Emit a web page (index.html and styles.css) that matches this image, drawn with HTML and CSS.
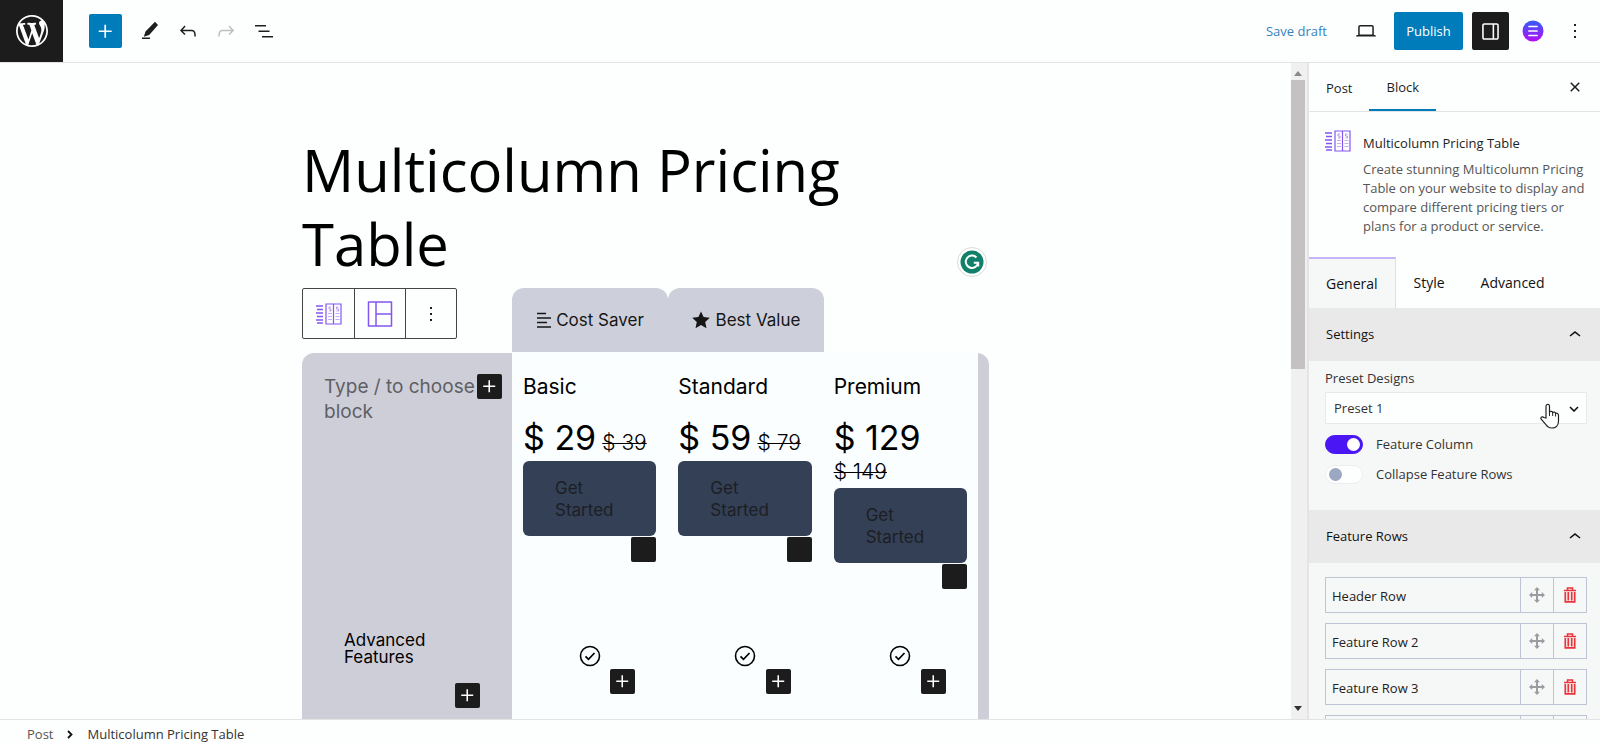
FILE: index.html
```html
<!DOCTYPE html>
<html lang="en">
<head>
<meta charset="utf-8">
<title>Multicolumn Pricing Table</title>
<link rel="stylesheet" href="styles.css">
</head>
<body>
<svg class="sprite" aria-hidden="true">
  <symbol id="plus" viewBox="0 0 24 24"><path d="M11 12.5V17.5H12.5V12.5H17.5V11H12.5V6H11V11H6V12.5H11Z"/></symbol>
  <symbol id="dots" viewBox="0 0 24 24"><path d="M13 19h-2v-2h2v2zm0-6h-2v-2h2v2zm0-6h-2V5h2v2z"/></symbol>
  <symbol id="up" viewBox="0 0 24 24"><path d="M6.5 12.4L12 8l5.5 4.4-.9 1.2L12 10l-4.5 3.6-1-1.2z"/></symbol>
  <symbol id="check" viewBox="0 0 22 22"><circle cx="11" cy="11" r="9.5" fill="none" stroke="currentColor" stroke-width="1.6"/><path d="M6.5 11.4l3 3 6-6.4" fill="none" stroke="currentColor" stroke-width="1.7"/></symbol>
  <symbol id="pricing" viewBox="0 0 26 22"><g fill="none" stroke="currentColor"><path d="M0 3h7M1 6.500h6M0 10h7M1 13.500h6M0 17h7M1 20h6" stroke-width="1.300"/><path d="M10 1h15v20H10zM17.500 1v20" stroke-width="1.200"/><path d="M12 10.500h4M12 13.500h4M12 16.500h4M19.500 10.500h4M19.500 13.500h4M19.500 16.500h4" stroke-width=".8" opacity=".6"/><path d="M15 4h-2v2h2v2h-2M22.500 4h-2v2h2v2h-2" stroke-width=".8" opacity=".7"/></g></symbol>
  <symbol id="move" viewBox="0 0 16 16"><path d="M8 0l3 3.200H9v3.800h3.800V5L16 8l-3.200 3V9H9v3.800h2L8 16l-3-3.200h2V9H3.200v2L0 8l3.200-3v2H7V3.200H5z"/></symbol>
  <symbol id="trash" viewBox="0 0 14 16"><path d="M1 3.500h12M4.500 3V1h5v2" fill="none" stroke="currentColor" stroke-width="1.500"/><path d="M2.300 5v9.800h9.400V5M5.300 5v8.500M8.700 5v8.500" fill="none" stroke="currentColor" stroke-width="1.700"/></symbol>
</svg>

<header class="topbar">
  <a class="logo" href="#" aria-label="View posts"><svg viewBox="0 0 20 20"><path d="M20 10c0-5.51-4.490-10-10-10C4.480 0 0 4.490 0 10c0 5.520 4.480 10 10 10 5.510 0 10-4.480 10-10zM7.780 15.370L4.370 6.220c.55-.02 1.170-.08 1.170-.08.5-.06.44-1.130-.06-1.110 0 0-1.450.11-2.370.11-.18 0-.37 0-.58-.01C4.120 2.690 6.870 1.110 10 1.110c2.330 0 4.450.87 6.050 2.340-.68-.11-1.650.39-1.650 1.580 0 .74.45 1.360.9 2.100.35.61.55 1.360.55 2.460 0 1.490-1.400 5-1.400 5l-3.030-8.370c.54-.02.82-.17.82-.17.5-.05.44-1.250-.06-1.220 0 0-1.440.12-2.380.12-.87 0-2.330-.12-2.330-.12-.5-.03-.56 1.200-.06 1.220l.92.08 1.260 3.410zM17.410 10c.24-.64.74-1.870.43-4.250.7 1.290 1.050 2.710 1.050 4.250 0 3.290-1.730 6.240-4.400 7.780.97-2.590 1.940-5.200 2.920-7.780zM6.100 18.090C3.120 16.650 1.110 13.530 1.110 10c0-1.300.23-2.480.72-3.590C3.250 10.300 4.670 14.200 6.100 18.090zm4.030-6.630l2.580 6.980c-.86.29-1.760.45-2.710.45-.79 0-1.570-.11-2.290-.33.81-2.380 1.620-4.740 2.420-7.100z"/></svg></a>
  <div class="tools">
    <button class="inserter" aria-label="Add block"><svg><use href="#plus"/></svg></button>
    <button class="tool" aria-label="Tools"><svg viewBox="0 0 24 24"><path d="m20 6-3-3.200-9.500 9.700-1.700 5.200 5.400-1.700L20 6ZM12 18.500H4V20h8v-1.500Z"/></svg></button>
    <button class="tool" aria-label="Undo"><svg viewBox="0 0 24 24"><path d="M18.300 11.700c-.6-.6-1.400-.9-2.300-.9H6.700l2.900-3.300-1.100-1-4.500 5L8.500 16l1-1-2.700-2.700H16c.5 0 .9.2 1.300.5 1 1 1 3.400 1 4.500v.3h1.500v-.2c0-1.500 0-4.300-1.500-5.700z"/></svg></button>
    <button class="tool faded" aria-label="Redo"><svg viewBox="0 0 24 24"><path d="M15.600 6.500l-1.100 1 2.900 3.300H8c-.9 0-1.700.3-2.300.9-1.400 1.500-1.400 4.200-1.400 5.600v.2h1.500v-.3c0-1.100 0-3.500 1-4.500.3-.3.7-.5 1.300-.5h9.200L14.500 15l1.100 1.100 4.600-4.600-4.600-5z"/></svg></button>
    <button class="tool" aria-label="Document overview"><svg viewBox="0 0 24 24"><path d="M3 6h11v1.500H3V6Zm3.500 5.500h11V13h-11v-1.500ZM21 17H10v1.500h11V17Z"/></svg></button>
  </div>
  <div class="actions">
    <button class="save">Save draft</button>
    <button class="tool" aria-label="Preview"><svg viewBox="0 0 24 24"><path d="M20.500 16h-.7V8c0-1.100-.9-2-2-2H6.200c-1.100 0-2 .9-2 2v8h-.7c-.8 0-1.500.7-1.500 1.500h20c0-.8-.7-1.500-1.500-1.500zM5.700 8c0-.3.2-.5.5-.5h11.600c.3 0 .5.2.5.5v7.600H5.700V8z"/></svg></button>
    <button class="publish">Publish</button>
    <button class="panel-toggle" aria-label="Settings"><svg viewBox="0 0 24 24"><path d="M18 4H6c-1.100 0-2 .9-2 2v12c0 1.100.9 2 2 2h12c1.100 0 2-.9 2-2V6c0-1.100-.9-2-2-2zm-4 14.500H6c-.3 0-.5-.2-.5-.5V6c0-.3.2-.5.5-.5h8v13zm4.500-.5c0 .3-.2.500-.5.500h-2.500v-13H18c.3 0 .5.2.5.5v12z"/></svg></button>
    <button class="blocks" aria-label="Essential Blocks"><svg viewBox="0 0 22 22"><defs><linearGradient id="eb" x1="0" y1="0" x2="0" y2="1"><stop offset="0.1" stop-color="#3d58f5"/><stop offset="1" stop-color="#b80af5"/></linearGradient></defs><circle cx="11" cy="11" r="10.500" fill="url(#eb)"/><path d="M7 6.500h8M7 11h2M10 11h5M7 15.500h8" stroke="#fff" stroke-width="1.700" stroke-linecap="round"/></svg></button>
    <button class="tool" aria-label="Options"><svg><use href="#dots"/></svg></button>
  </div>
</header>

<div class="workspace">
  <main class="canvas">
    <div class="content">
      <h1 class="title">Multicolumn Pricing Table</h1>
      <svg class="grammar" viewBox="0 0 30 30" role="img" aria-label="Grammar check"><circle cx="15" cy="15" r="14.500" fill="#fff" stroke="#d5dcda"/><circle cx="15" cy="15" r="11.500" fill="#11806a"/><path d="M19.500 10.500a6.200 6.200 0 1 0 1.600 5.200h-4.300M21.200 15.700v3.800" fill="none" stroke="#fff" stroke-width="2"/></svg>
      <div class="block-head">
        <div class="block-tools">
          <button aria-label="Pricing table block"><svg class="pricing-icon"><use href="#pricing"/></svg></button>
          <button aria-label="Layout"><svg class="layout-icon" viewBox="0 0 26 26"><path d="M1.500 1h23v24h-23zM9 1v24M9 13h15.500" fill="none" stroke="currentColor" stroke-width="1.500" stroke-linejoin="round"/></svg></button>
          <button class="dark" aria-label="Block options"><svg class="dots-icon"><use href="#dots"/></svg></button>
        </div>
        <div class="ribbons">
          <div class="ribbon"><svg viewBox="0 0 16 16"><path d="M1 1.500h9M1 6h14M1 10.500h10M1 15h14" stroke="currentColor" stroke-width="1.700"/></svg>Cost Saver</div>
          <div class="ribbon wide"><svg viewBox="0 0 18 17"><path d="M9 0l2.600 5.600 6.200.7-4.600 4.200 1.300 6.200L9 13.600l-5.500 3.100 1.300-6.200L.2 6.300l6.200-.7z"/></svg>Best Value</div>
        </div>
      </div>
      <div class="pricing">
        <section class="features">
          <div class="feature-header"><p>Type / to choose block</p><button class="add" aria-label="Add block"><svg><use href="#plus"/></svg></button></div>
          <div class="feature-row"><p>Advanced Features</p><button class="add" aria-label="Add block"><svg><use href="#plus"/></svg></button></div>
        </section>
        <section class="plan">
          <div class="plan-header"><h2>Basic</h2><p class="price"><span>$ 29</span> <s>$ 39</s></p><button class="start">Get Started</button><button class="add" aria-label="Add block"></button></div>
          <div class="plan-row"><svg class="check"><use href="#check"/></svg><button class="add" aria-label="Add block"><svg><use href="#plus"/></svg></button></div>
        </section>
        <section class="plan">
          <div class="plan-header"><h2>Standard</h2><p class="price"><span>$ 59</span> <s>$ 79</s></p><button class="start">Get Started</button><button class="add" aria-label="Add block"></button></div>
          <div class="plan-row"><svg class="check"><use href="#check"/></svg><button class="add" aria-label="Add block"><svg><use href="#plus"/></svg></button></div>
        </section>
        <section class="plan">
          <div class="plan-header"><h2>Premium</h2><p class="price"><span>$ 129</span> <s>$ 149</s></p><button class="start">Get Started</button><button class="add" aria-label="Add block"></button></div>
          <div class="plan-row"><svg class="check"><use href="#check"/></svg><button class="add" aria-label="Add block"><svg><use href="#plus"/></svg></button></div>
        </section>
      </div>
    </div>
  </main>
  <div class="scrollbar" aria-hidden="true"><svg viewBox="0 0 8 5"><path d="M0 5l4-5 4 5z" fill="#8a8a8a"/></svg><div class="thumb"></div><svg class="down" viewBox="0 0 8 5"><path d="M0 0l4 5 4-5z" fill="#333"/></svg></div>
  <aside class="sidebar">
    <nav class="side-tabs"><button>Post</button><button class="active">Block</button><button class="close" aria-label="Close settings"><svg viewBox="0 0 24 24"><path d="M12 13.060l3.712 3.713 1.061-1.060L13.061 12l3.712-3.712-1.060-1.060L12 10.938 8.288 7.227l-1.061 1.060L10.939 12l-3.712 3.712 1.060 1.061L12 13.061z"/></svg></button></nav>
    <section class="card"><svg class="pricing-icon"><use href="#pricing"/></svg><div><h2>Multicolumn Pricing Table</h2><p>Create stunning Multicolumn Pricing Table on your website to display and compare different pricing tiers or plans for a product or service.</p></div></section>
    <nav class="panel-tabs"><button class="active">General</button><button>Style</button><button>Advanced</button></nav>
    <section class="panel settings">
      <h2><button>Settings<svg><use href="#up"/></svg></button></h2>
      <div class="panel-body">
        <label for="preset">Preset Designs</label>
        <div class="select"><select id="preset"><option>Preset 1</option></select><svg class="caret" viewBox="0 0 10 6"><path d="M1 1l4 4 4-4" fill="none" stroke="#111" stroke-width="1.600"/></svg>
        <svg class="hand" viewBox="0 0 20 26"><path d="M6 15V3.500C6 .5 9.500.5 9.500 3.500V9c.8-1 3-.8 3.200.6 1-.9 2.700-.5 2.900.9 1.200-.7 2.900 0 2.900 1.700V18c0 4-2.500 7-6.500 7-3.500 0-5-1.500-6.500-4L1.200 16.200c-1-1.900 1.200-3.200 2.700-1.700z" fill="#fff" stroke="#222" stroke-width="1.200"/><path d="M9.500 9v4M12.700 10v3M15.600 11v2.500" stroke="#222"/></svg></div>
        <label class="toggle"><input type="checkbox" checked>Feature Column</label>
        <label class="toggle"><input type="checkbox">Collapse Feature Rows</label>
      </div>
    </section>
    <section class="panel">
      <h2><button>Feature Rows<svg><use href="#up"/></svg></button></h2>
      <ul class="rows">
        <li><span>Header Row</span><button aria-label="Move"><svg><use href="#move"/></svg></button><button class="delete" aria-label="Delete"><svg><use href="#trash"/></svg></button></li>
        <li><span>Feature Row 2</span><button aria-label="Move"><svg><use href="#move"/></svg></button><button class="delete" aria-label="Delete"><svg><use href="#trash"/></svg></button></li>
        <li><span>Feature Row 3</span><button aria-label="Move"><svg><use href="#move"/></svg></button><button class="delete" aria-label="Delete"><svg><use href="#trash"/></svg></button></li>
        <li><span></span><button aria-label="Move"></button><button aria-label="Delete"></button></li>
      </ul>
    </section>
  </aside>
</div>
<footer class="crumbs"><a href="#">Post</a><svg viewBox="0 0 6 9"><path d="M1 1l3.500 3.500L1 8" fill="none" stroke="currentColor" stroke-width="1.800"/></svg><span>Multicolumn Pricing Table</span></footer>
</body>
</html>
```
FILE: styles.css
```css
* { box-sizing: border-box; }
body {
  margin: 0;
  height: 100vh;
  display: flex;
  flex-direction: column;
  overflow: hidden;
  background: #fdfefe;
  color: #1e1e1e;
  font: 13px/19px "Open Sans", "Noto Sans", sans-serif;
}
h1, h2, p, ul { margin: 0; padding: 0; font-weight: 400; }
button {
  border: 0;
  padding: 0;
  background: none;
  color: inherit;
  font: inherit;
  display: flex;
  align-items: center;
  justify-content: center;
}
svg { fill: currentColor; flex: none; display: block; }
.sprite { position: absolute; width: 0; height: 0; }

.topbar { display: flex; height: 63px; flex: none; border-bottom: 1px solid #e2e3e3; }
.logo { width: 63px; height: 62px; background: #1c1c1c; color: #fff; display: flex; align-items: center; justify-content: center; }
.logo svg { width: 32px; height: 32px; }
.tools { display: flex; align-items: center; gap: 5px; padding-left: 26px; }
.inserter { width: 33px; height: 34px; border-radius: 2px; background: #007cba; color: #fff; margin-right: 6px; }
.inserter svg { width: 27px; height: 27px; }
.tool { width: 33px; height: 34px; }
.tool svg { width: 24px; height: 24px; }
.faded { color: #bfbfbf; }
.actions { margin-left: auto; display: flex; align-items: center; padding-right: 9px; }
.save { color: #3582bd; margin-right: 22px; }
.publish { width: 69px; height: 38px; margin: 0 9px 0 12px; border-radius: 2px; background: #007cba; color: #fff; }
.panel-toggle { width: 37px; height: 38px; margin-right: 13px; border-radius: 2px; background: #1c1c1c; color: #fff; }
.panel-toggle svg { width: 25px; height: 25px; }
.blocks { margin-right: 14px; }
.blocks svg { width: 22px; height: 22px; }

.workspace { flex: 1; min-height: 0; display: flex; }
.canvas { flex: 1; min-width: 0; overflow: hidden; font-family: Inter, sans-serif; }
.content { position: relative; max-width: 687px; margin: 0 auto; padding-top: 70px; }
.title { font: 400 58px/74px "Open Sans", "Noto Sans", sans-serif; color: #000; padding-right: 100px; }
.grammar { position: absolute; top: 184px; right: 2px; width: 30px; height: 30px; }
.block-head { display: flex; align-items: flex-start; justify-content: space-between; margin-top: 7px; }
.block-tools { display: flex; border: 1px solid #444; border-radius: 2px; color: #8456f0; }
.block-tools button { width: 51px; height: 49px; }
.block-tools button + button { border-left: 1px solid #444; }
.pricing-icon { width: 26px; height: 22px; color: #8456f0; }
.layout-icon { width: 26px; height: 26px; }
.block-tools .dark { color: #1e1e1e; }
.dots-icon { width: 24px; height: 24px; }
.ribbons { display: flex; width: 477px; }
.ribbon { width: 156px; height: 64px; border-radius: 12px 12px 0 0; background: #cdd0da; color: #161616; display: flex; align-items: center; justify-content: center; gap: 4px; font-size: 17px; }
.ribbon svg { width: 16px; height: 16px; }
.wide { gap: 6px; }
.wide svg { width: 18px; height: 18px; }

.pricing { display: grid; grid-template-columns: 210px repeat(3, 1fr); margin-top: 1px; padding-right: 11px; background: #cdced8; border-radius: 12px 12px 0 0; }
.plan { background: #fbfefe; color: #000; }
.feature-header, .plan-header { height: 264px; }
.feature-header { display: flex; align-items: flex-start; padding: 21px 10px 0 22px; }
.feature-header p { flex: 1; color: #5f5f64; font-size: 19px; line-height: 25px; }
.add { width: 25px; height: 25px; border-radius: 2px; background: #1c1c1c; color: #fff; flex: none; }
.add svg { width: 25px; height: 25px; }
.plan-header { padding: 21px 11px 0; }
.plan-header h2 { font-size: 21px; line-height: 26px; }
.price { display: flex; flex-wrap: wrap; align-items: baseline; column-gap: 6px; margin-top: 18px; font-size: 34px; line-height: 40px; }
.price s { font-size: 21px; line-height: 27px; font-weight: 300; text-decoration-thickness: 1px; }
.start { width: 100%; margin-top: 3px; padding: 16px 32px 15px; border-radius: 6px; background: #344056; color: #1c1e24; font-size: 17px; line-height: 22px; text-align: left; }
.plan-header .add { margin: 1px 0 0 auto; }
.feature-row { padding: 15px 32px 12px 42px; height: 124px; color: #000; font-size: 17px; line-height: 17px; }
.feature-row p { width: 100px; }
.feature-row .add { margin: 17px 0 0 auto; }
.plan-row { padding: 28px 32px 0; }
.check { width: 22px; height: 22px; margin: 0 auto; }
.plan-row .add { margin: 2px 0 0 auto; }

.scrollbar { width: 18px; padding: 8px 3px 8px 1px; background: #f0f0f0; border-right: 2px solid #e4e4e6; display: flex; flex-direction: column; align-items: center; }
.scrollbar svg { width: 8px; height: 5px; }
.thumb { width: 14px; height: 289px; margin: 4px 0 auto; background: #c3c1c1; }

.sidebar { width: 291px; overflow: hidden; flex: none; background: #f6f7f7; }
.side-tabs { display: flex; height: 49px; background: #fdfefe; border-bottom: 1px solid #e2e3e3; }
.side-tabs button { padding: 2px 17px 0; }
.side-tabs .active { border-bottom: 2px solid #007cba; }
.side-tabs .close { margin-left: auto; padding: 0 13px; }
.close svg { width: 24px; height: 24px; }
.card { display: flex; gap: 12px; padding: 18px 12px 21px 16px; background: #fdfefe; }
.card h2 { font-size: 13px; line-height: 20px; font-weight: 500; margin: 3px 0 7px; }
.card p { color: #555; }
.panel-tabs { display: flex; background: #fdfefe; }
.panel-tabs button { height: 51px; padding: 0 18px; font-size: 14px; font-weight: 500; color: #111; }
.panel-tabs .active { padding: 0 17px; background: #f6f7f7; border-top: 2px solid #c4b5fd; border-right: 1px solid #dedfe8; }
.panel h2 button { width: 100%; height: 53px; padding: 0 13px 0 17px; justify-content: space-between; background: #e9e9ea; color: #111; font-size: 13px; font-weight: 500; }
.panel h2 svg { width: 24px; height: 24px; }
.panel-body { padding: 8px 13px 22px 16px; height: 149px; color: #333; }
.select { position: relative; margin: 4px 0 9px; }
.select select { appearance: none; width: 100%; height: 32px; border: 1px solid #e8e9ea; border-radius: 0; background: #fdfefe; padding: 0 8px; color: #333; font: inherit; display: block; }
.caret { position: absolute; right: 8px; top: 14px; width: 10px; height: 6px; }
.hand { position: absolute; right: 27px; top: 11px; width: 20px; height: 26px; }
.toggle { display: flex; align-items: center; gap: 13px; height: 22px; margin-bottom: 8px; }
.toggle input { appearance: none; width: 38px; height: 19px; margin: 0; border-radius: 10px; background: #fdfefe; border: 1px solid #eceded; display: flex; align-items: center; padding: 0 3px; }
.toggle input::before { content: ""; width: 13px; height: 13px; border-radius: 50%; background: #9ba8c1; }
.toggle input:checked { background: #4b16f4; border-color: #4b16f4; justify-content: flex-end; padding: 0 2px; }
.toggle input:checked::before { background: #fff; }
.rows { list-style: none; padding: 14px 13px 0 16px; display: grid; gap: 10px; }
.rows li { display: flex; height: 36px; border: 1px solid #bfc3d6; }
.rows span { flex: 1; padding-left: 6px; line-height: 36px; color: #222; }
.rows button { width: 33px; border-left: 1px solid #bfc3d6; color: #9a9c9f; }
.rows svg { width: 16px; height: 16px; }
.rows .delete { color: #e8343a; }
.rows .delete svg { width: 14px; }

.crumbs { flex: none; height: 24px; padding: 5px 27px 0; display: flex; align-items: center; gap: 14px; border-top: 1px solid #e2e3e3; color: #333; overflow: hidden; }
.crumbs a { color: #555; text-decoration: none; }
.crumbs svg { width: 6px; height: 9px; color: #111; }
```
